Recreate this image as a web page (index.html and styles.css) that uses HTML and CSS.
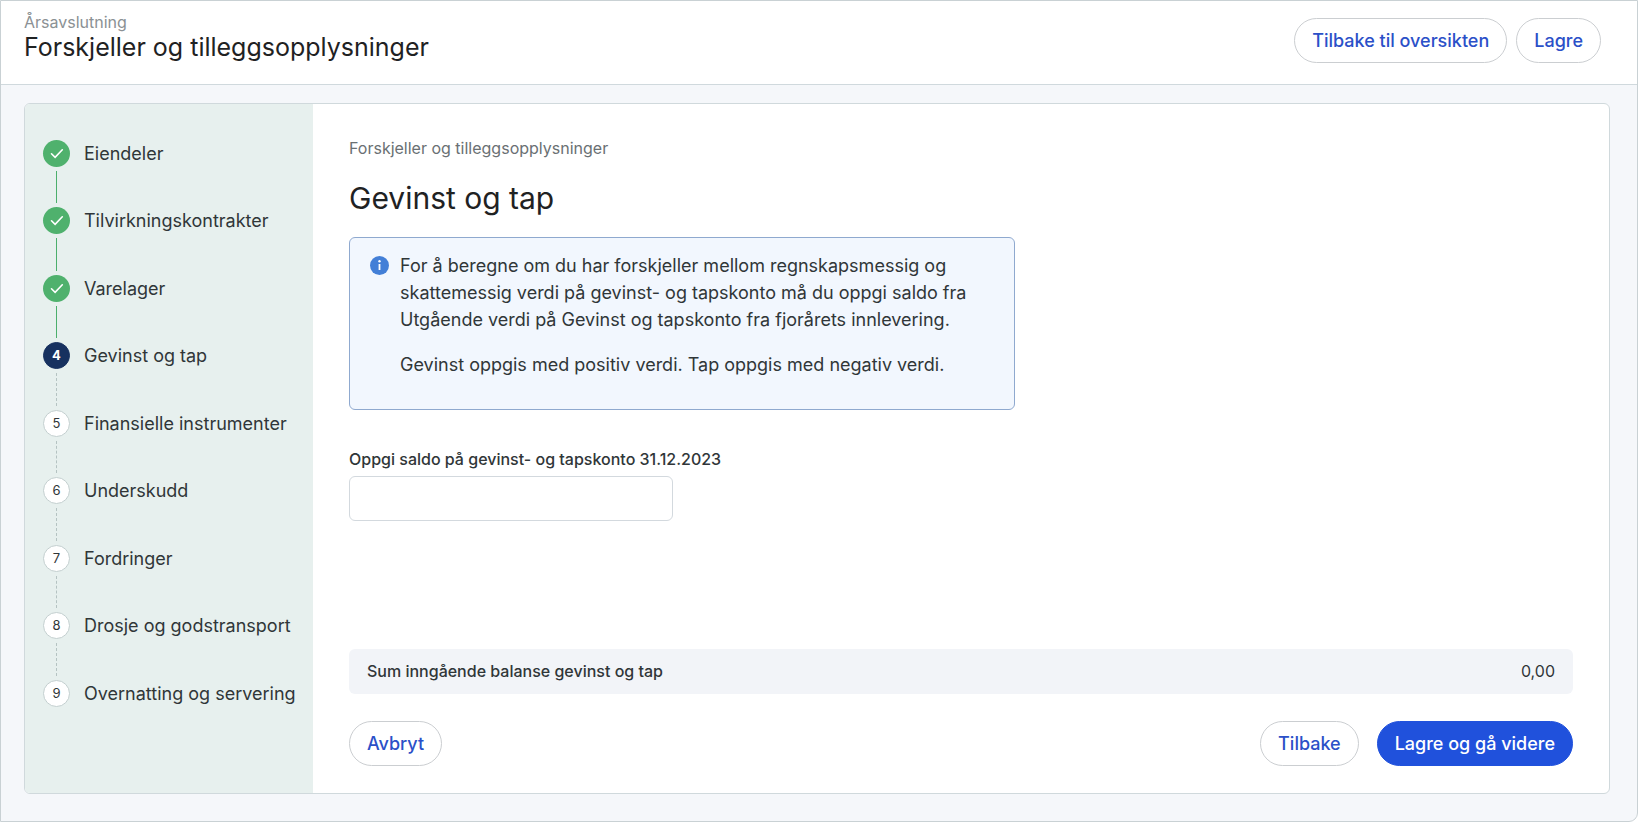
FILE: index.html
```html
<!DOCTYPE html>
<html lang="no">
  <head>
    <meta charset="UTF-8" />
    <meta name="viewport" content="width=device-width, initial-scale=1.0" />
    <title>Forskjeller og tilleggsopplysninger</title>
    <link rel="stylesheet" href="styles.css">
  </head>

  <body>
    <div class="page">
      <header class="page-header">
        <div class="page-title">
          <p>Årsavslutning</p>
          <h1>Forskjeller og tilleggsopplysninger</h1>
        </div>
        <div class="header-buttons">
          <button type="button" class="btn">Tilbake til oversikten</button>
          <button type="button" class="btn">Lagre</button>
        </div>
      </header>

      <div class="card">
        <nav class="sidebar">
          <ol class="steps">
            <li class="step done">
              <span class="marker"><svg viewBox="0 0 27 27"><path d="M8.5 13.8l3.6 3.6 7.2-7.6" /></svg></span>
              <span class="step-name">Eiendeler</span>
            </li>
            <li class="step done">
              <span class="marker"><svg viewBox="0 0 27 27"><path d="M8.5 13.8l3.6 3.6 7.2-7.6" /></svg></span>
              <span class="step-name">Tilvirkningskontrakter</span>
            </li>
            <li class="step done">
              <span class="marker"><svg viewBox="0 0 27 27"><path d="M8.5 13.8l3.6 3.6 7.2-7.6" /></svg></span>
              <span class="step-name">Varelager</span>
            </li>
            <li class="step active" aria-current="step">
              <span class="marker">4</span>
              <span class="step-name">Gevinst og tap</span>
            </li>
            <li class="step">
              <span class="marker">5</span>
              <span class="step-name">Finansielle instrumenter</span>
            </li>
            <li class="step">
              <span class="marker">6</span>
              <span class="step-name">Underskudd</span>
            </li>
            <li class="step">
              <span class="marker">7</span>
              <span class="step-name">Fordringer</span>
            </li>
            <li class="step">
              <span class="marker">8</span>
              <span class="step-name">Drosje og godstransport</span>
            </li>
            <li class="step">
              <span class="marker">9</span>
              <span class="step-name">Overnatting og servering</span>
            </li>
          </ol>
        </nav>

        <main class="content">
          <p class="breadcrumb">Forskjeller og tilleggsopplysninger</p>
          <h2>Gevinst og tap</h2>

          <div class="info-box">
            <svg class="info-icon" viewBox="0 0 19 19">
              <circle cx="9.5" cy="9.5" r="9.5" fill="#437fd7" />
              <circle cx="9.5" cy="5.3" r="1.2" fill="#fff" />
              <path d="M9.5 8v6" fill="none" stroke="#fff" stroke-width="1.8" />
            </svg>
            <div class="info-text">
              <p>
                For å beregne om du har forskjeller mellom regnskapsmessig og skattemessig verdi på gevinst- og
                tapskonto må du oppgi saldo fra Utgående verdi på Gevinst og tapskonto fra fjorårets innlevering.
              </p>
              <p>Gevinst oppgis med positiv verdi. Tap oppgis med negativ verdi.</p>
            </div>
          </div>

          <div class="field">
            <label for="saldo">Oppgi saldo på gevinst- og tapskonto 31.12.2023</label>
            <input type="text" id="saldo" />
          </div>

          <div class="sum">
            <span class="sum-label">Sum inngående balanse gevinst og tap</span>
            <span>0,00</span>
          </div>

          <div class="actions">
            <button type="button" class="btn">Avbryt</button>
            <div class="actions-right">
              <button type="button" class="btn">Tilbake</button>
              <button type="submit" class="btn btn-primary">Lagre og gå videre</button>
            </div>
          </div>
        </main>
      </div>
    </div>
  </body>
</html>
```
FILE: styles.css
```css
* {
  box-sizing: border-box;
}

body {
  margin: 0;
  font-family: Inter, "Liberation Sans", sans-serif;
  font-size: 18px;
  line-height: 27px;
  color: #303638;
}

h1,
h2,
p {
  margin: 0;
}

.page {
  display: flex;
  flex-direction: column;
  min-height: 100vh;
  background-color: #f5f7fa;
  border: 1px solid #c9d1d4;
  border-bottom-right-radius: 9px;
}

/* header */
.page-header {
  display: flex;
  justify-content: space-between;
  align-items: flex-start;
  padding: 12px 36px 21px 23px;
  background-color: #fff;
  border-bottom: 1px solid #d0d9dd;
}

.page-title p {
  font-size: 16px;
  line-height: 19px;
  color: #8b9194;
}

.page-title h1 {
  font-size: 25px;
  line-height: 30px;
  font-weight: 400;
  color: #1f2223;
}

.header-buttons {
  display: flex;
  gap: 9px;
  padding-top: 5px;
}

.btn {
  height: 45px;
  padding: 0 17px;
  border: 1px solid #cbced1;
  border-radius: 23px;
  background-color: #fff;
  font-family: inherit;
  font-size: 18px;
  font-weight: 500;
  color: #2b50c8;
  cursor: pointer;
}

.btn-primary {
  border-color: #2051dc;
  background-color: #2051dc;
  color: #fff;
}

.card {
  display: flex;
  flex: 1;
  margin: 18px 27px 27px 23px;
  border: 1px solid #d0d9dc;
  border-radius: 6px;
  background-color: #fff;
  overflow: hidden;
}

/* steps */
.sidebar {
  display: flex;
  flex-shrink: 0;
  width: 288px;
  padding: 36px 0 46px 18px;
  background-color: #e7f0ee;
}

.steps {
  display: flex;
  flex-direction: column;
  margin: 0;
  padding: 0;
  list-style: none;
}

.step {
  display: grid;
  grid-template-columns: 27px auto;
  grid-template-rows: 27px 1fr;
  column-gap: 14px;
  flex: 1;
  min-height: 60px;
}

.marker {
  display: flex;
  align-items: center;
  justify-content: center;
  border: 1px solid #c3cfcf;
  border-radius: 50%;
  background-color: #fff;
  font-size: 13px;
}

.step-name {
  white-space: nowrap;
}

.step::after {
  content: "";
  justify-self: center;
  width: 1px;
  margin: 4px 0;
  border-left: 1px dashed #b5c3c2;
}

.step:last-child::after {
  display: none;
}

.done::after {
  border-left: 1px solid #4caf6c;
}

.done .marker {
  border: none;
  background-color: #4fb16d;
}

.done svg {
  width: 27px;
  height: 27px;
  fill: none;
  stroke: #fff;
  stroke-width: 1.6;
  stroke-linecap: round;
}

.active .marker {
  border-color: #17315f;
  background-color: #17315f;
  color: #fff;
  font-weight: 700;
}

/* main content */
.content {
  display: flex;
  flex-direction: column;
  flex: 1;
  padding: 32px 36px 27px;
}

.breadcrumb {
  font-size: 16px;
  line-height: 24px;
  color: #6a7073;
}

.content h2 {
  margin: 18px 0;
  font-size: 30px;
  line-height: 41px;
  font-weight: 400;
  color: #1f2223;
}

.info-box {
  display: flex;
  gap: 11px;
  max-width: 666px;
  padding: 14px 20px 13px;
  border: 1px solid #8fa9cf;
  border-radius: 6px;
  background-color: #f2f7fe;
}

.info-icon {
  flex-shrink: 0;
  width: 19px;
  height: 19px;
  margin-top: 4px;
}

.info-text p {
  margin-bottom: 18px;
}

.field {
  display: flex;
  flex-direction: column;
  align-items: flex-start;
  gap: 5px;
  margin: 37px 0 36px;
}

.field label {
  font-size: 16px;
  line-height: 24px;
  font-weight: 500;
}

.field input {
  width: 324px;
  height: 45px;
  padding: 0 12px;
  border: 1px solid #d3d9de;
  border-radius: 6px;
  background-color: #fff;
  font-family: inherit;
  font-size: 18px;
  color: inherit;
}

.sum {
  display: flex;
  justify-content: space-between;
  align-items: center;
  height: 45px;
  margin-top: auto;
  padding: 0 18px;
  border-radius: 6px;
  background-color: #f2f4f8;
  font-size: 16px;
}

.sum-label {
  font-weight: 500;
}

.actions {
  display: flex;
  justify-content: space-between;
  margin-top: 27px;
}

.actions-right {
  display: flex;
  gap: 18px;
}
```
